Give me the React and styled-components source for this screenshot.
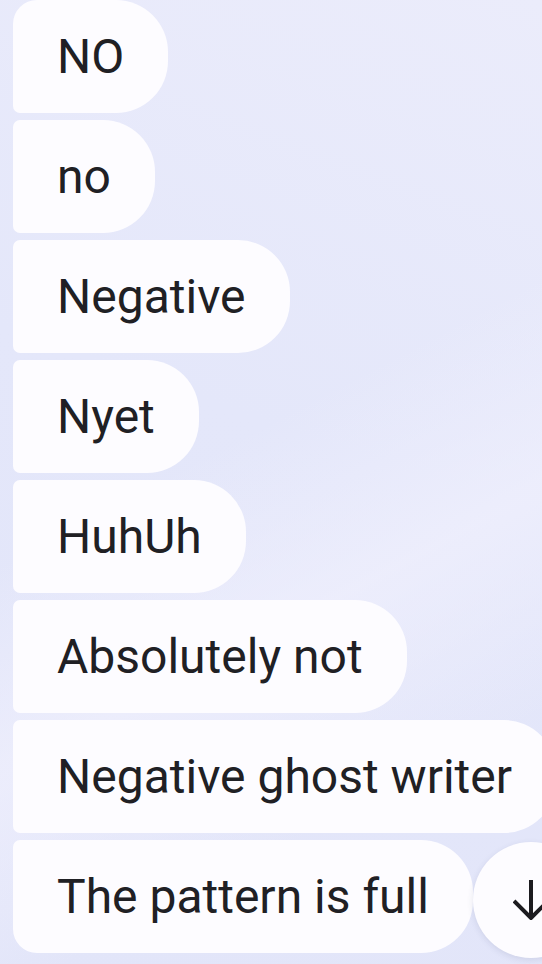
import React from 'react';
import styled, { createGlobalStyle } from 'styled-components';

const GlobalStyle = createGlobalStyle`
  html, body {
    margin: 0;
    padding: 0;
    width: 542px;
    height: 964px;
    overflow: hidden;
  }
  body {
    font-family: Roboto, "Noto Sans", "Liberation Sans", sans-serif;
  }
`;

const messages = [
  'NO',
  'no',
  'Negative',
  'Nyet',
  'HuhUh',
  'Absolutely not',
  'Negative ghost writer',
  'The pattern is full',
];

const Screen = styled.div`
  position: relative;
  width: 542px;
  height: 964px;
  overflow: hidden;
  background:
    linear-gradient(152deg, rgba(255,255,255,0) 45%, rgba(240,240,253,0.7) 62%, rgba(255,255,255,0) 80%),
    linear-gradient(200deg, #ebecfb 0%, #e4e7fa 45%, #e2e5f9 100%);
`;

const Thread = styled.div`
  display: flex;
  flex-direction: column;
  align-items: flex-start;
  gap: 7px;
  padding-left: 13px;
`;

const Bubble = styled.div`
  display: flex;
  align-items: center;
  height: 113px;
  box-sizing: border-box;
  padding: 0 44px 0 44px;
  background: #fdfcff;
  color: #202024;
  font-size: 48px;
  white-space: nowrap;
  border-radius: ${({ $first }) => ($first ? '24px' : '7px')} 52px 52px
    ${({ $last }) => ($last ? '24px' : '7px')};
`;

const ScrollButton = styled.button`
  position: absolute;
  left: 473px;
  top: 842px;
  width: 116px;
  height: 116px;
  border: none;
  border-radius: 50%;
  background: #fdfcff;
  box-shadow: 0 2px 6px rgba(60, 64, 110, 0.12);
  display: flex;
  align-items: center;
  justify-content: flex-start;
  padding: 0 0 0 40px;
  color: #1c1b1f;

  svg {
    display: block;
  }
`;

export default function App() {
  return (
    <>
      <GlobalStyle />
      <Screen>
        <Thread>
          {messages.map((text, i) => (
            <Bubble key={i} $first={i === 0} $last={i === messages.length - 1}>
              {text}
            </Bubble>
          ))}
        </Thread>
        <ScrollButton aria-label="Scroll to bottom">
          <svg width="40" height="40" viewBox="0 0 40 40" fill="none">
            <path d="M18 0v38" stroke="currentColor" strokeWidth="4" />
            <path d="M1 21l17 17 17-17" stroke="currentColor" strokeWidth="4" />
          </svg>
        </ScrollButton>
      </Screen>
    </>
  );
}
